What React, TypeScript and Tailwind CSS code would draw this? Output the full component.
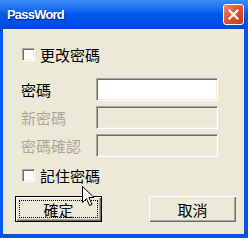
const cjk = "font-['Noto_Sans_CJK_TC','Noto_Sans_CJK_SC',sans-serif]";

function Checkbox() {
  return (
    <span className="block h-[13px] w-[13px] border border-t-[#ACA899] border-l-[#ACA899] border-b-white border-r-white bg-white shadow-[inset_1px_1px_0_#716F64,inset_-1px_-1px_0_#F1EFE2]" />
  );
}

function Field({ label, enabled }: { label: string; enabled?: boolean }) {
  return (
    <div className="flex h-[23px] items-center">
      <span className={`w-[93px] shrink-0 whitespace-nowrap pl-[18px] text-[15px] leading-none ${enabled ? "text-black" : "text-[#ACA899]"}`}>{label}</span>
      <div
        className={`h-[23px] w-[122px] shrink-0 border border-t-[#ACA899] border-l-[#ACA899] border-b-white border-r-white shadow-[inset_1px_1px_0_#716F64,inset_-1px_-1px_0_#F1EFE2] ${enabled ? "bg-white" : "bg-[#ECE9D8]"}`}
      />
    </div>
  );
}

export default function App() {
  return (
    <div className={`relative flex h-[238px] w-[248px] flex-col bg-[#0055E5] ${cjk}`}>
      <div className="flex h-[29px] items-center justify-between bg-gradient-to-b from-[#3D8BF5] via-[#0058EE] to-[#0249D7] pl-[7px] pr-[4px]">
        <span className="font-['Liberation_Sans',sans-serif] text-[13px] font-bold tracking-[-0.8px] text-white [text-shadow:1px_1px_0_#0A1E8C]">
          PassWord
        </span>
        <div className="flex h-[21px] w-[21px] items-center justify-center rounded-[3px] border border-white bg-gradient-to-br from-[#F08A64] via-[#E0532E] to-[#C13A17]">
          <svg width="11" height="11" viewBox="0 0 11 11">
            <path d="M1.5 1.5 L9.5 9.5 M9.5 1.5 L1.5 9.5" stroke="white" strokeWidth="2.2" strokeLinecap="square" />
          </svg>
        </div>
      </div>
      <div className="mb-[4px] ml-[3px] mr-[4px] flex flex-1 flex-col bg-[#ECE9D8]">
        <div className="mt-[18px] flex h-[15px] items-center gap-[5px] pl-[19px]">
          <Checkbox />
          <span className="text-[15px] leading-none text-black">更改密碼</span>
        </div>
        <div className="mt-[16px] flex flex-col gap-[5px]">
          <Field label="密碼" enabled />
          <Field label="新密碼" />
          <Field label="密碼確認" />
        </div>
        <div className="mt-[11px] flex h-[15px] items-center gap-[5px] pl-[19px]">
          <Checkbox />
          <span className="text-[15px] leading-none text-black">記住密碼</span>
        </div>
        <div className="mt-[13px] flex items-center justify-between pl-[12px] pr-[8px]">
          <button className="h-[26px] w-[87px] border border-black bg-[#ECE9D8] p-0 shadow-[inset_1px_1px_0_#fff,inset_-1px_-1px_0_#716F64,inset_-2px_-2px_0_#ACA899]">
            <span className="mx-[3px] my-[3px] flex h-[18px] items-center justify-center border border-dotted border-black text-[15px] leading-none text-black">
              確定
            </span>
          </button>
          <button className="flex h-[26px] w-[87px] items-center justify-center bg-[#ECE9D8] text-[15px] leading-none text-black shadow-[inset_1px_1px_0_#fff,inset_-1px_-1px_0_#716F64,inset_-2px_-2px_0_#ACA899]">
            取消
          </button>
        </div>
      </div>
      <svg className="absolute left-[82px] top-[186px]" width="13" height="21" viewBox="0 0 13 21">
        <path d="M0.5 0.5 L0.5 16.5 L4.5 12.5 L7.5 19.5 L10 18.5 L7 11.5 L12 11.5 Z" fill="white" stroke="black" strokeWidth="1" />
      </svg>
    </div>
  );
}
